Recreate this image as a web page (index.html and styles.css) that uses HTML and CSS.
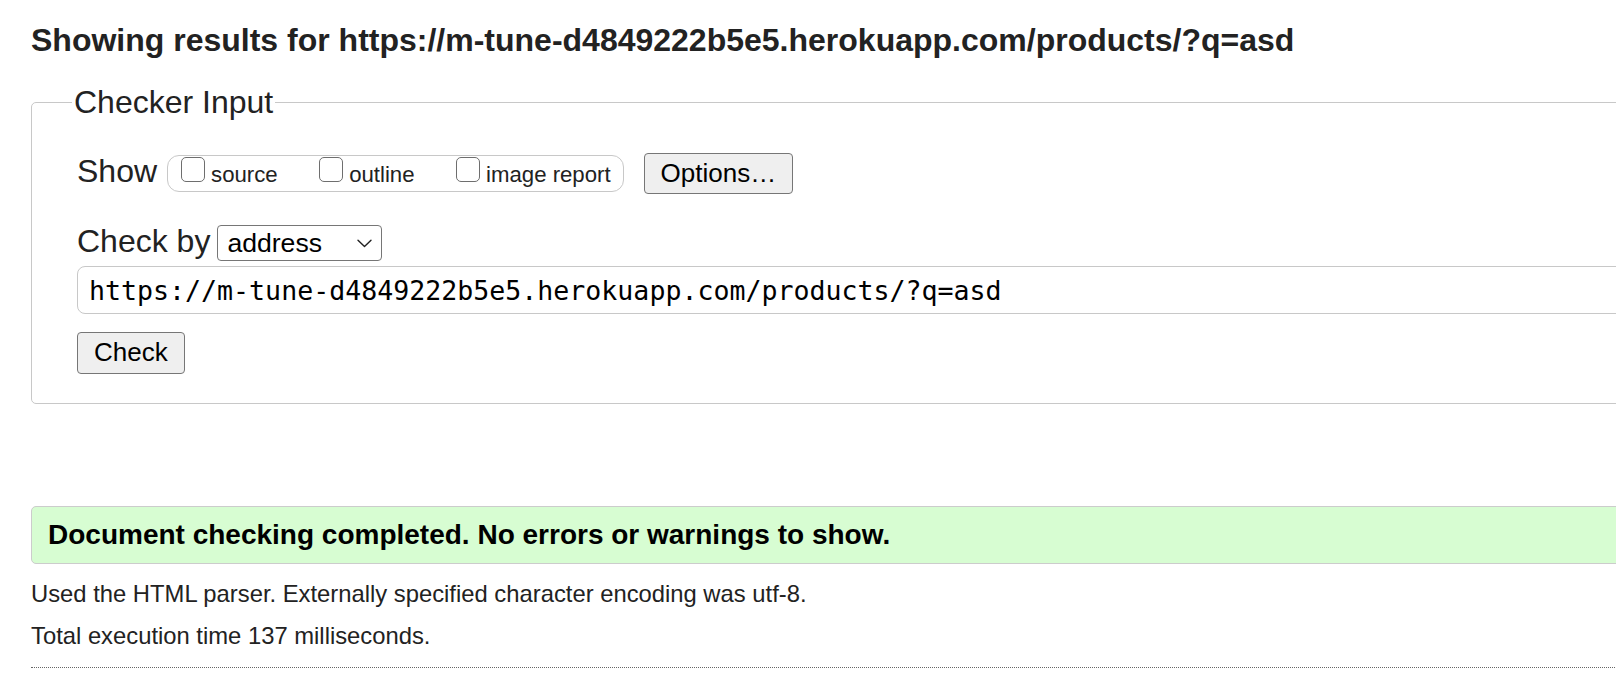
FILE: index.html
```html
<!DOCTYPE html>
<html lang="en">
<head>
<meta charset="utf-8">
<title>Nu Html Checker</title>
<link rel="stylesheet" href="styles.css">
</head>
<body>
<h1 class="results-title">Showing results for https://m-tune-d4849222b5e5.herokuapp.com/products/?q=asd</h1>
<form class="checker">
  <fieldset class="checker-input">
    <legend class="checker-legend">Checker Input</legend>
    <div class="show-row">
      <span class="row-label show-label">Show</span>
      <div class="show-options">
        <label class="opt"><input type="checkbox" class="cb">source</label>
        <label class="opt"><input type="checkbox" class="cb">outline</label>
        <label class="opt"><input type="checkbox" class="cb">image report</label>
      </div>
      <button type="button" class="btn btn-options">Options…</button>
    </div>
    <div class="by-row">
      <label class="row-label by-label" for="docselect">Check by</label>
      <span class="select-wrap">
        <select id="docselect" class="doc-select"><option>address</option></select>
        <svg class="chevron" width="15" height="9" viewBox="0 0 15 9" aria-hidden="true"><path d="M1 1.2 L7.5 7.6 L14 1.2" fill="none" stroke="#222" stroke-width="1.4" stroke-linecap="round" stroke-linejoin="round"/></svg>
      </span>
    </div>
    <input class="url-input" type="text" value="https://m-tune-d4849222b5e5.herokuapp.com/products/?q=asd">
    <div class="submit-row"><button type="button" class="btn btn-check">Check</button></div>
  </fieldset>
</form>
<p class="success">Document checking completed. No errors or warnings to show.</p>
<p class="meta meta-parser">Used the HTML parser. Externally specified character encoding was utf-8.</p>
<p class="meta meta-time">Total execution time 137 milliseconds.</p>
<hr class="dotted">
</body>
</html>
```

FILE: styles.css
```css
html {
  overflow: hidden;
}

body {
  margin: 0;
  padding: 22px 0 0 31px;
  font-family: "Liberation Sans", Arial, sans-serif;
  color: #222;
  background: #fff;
}

.results-title {
  margin: 0;
  font-size: 32px;
  font-weight: bold;
  line-height: normal;
  white-space: nowrap;
}

.checker {
  width: 1700px;
  margin-top: 25px;
}

.checker-input {
  margin: 0;
  padding: 32px 0 29px 45px;
  border: 1px solid #c8c8c8;
  border-radius: 5px;
  min-width: 0;
}

.checker-legend {
  font-size: 32px;
  line-height: normal;
  padding: 0 2px;
  margin-left: -5px;
}

.show-row {
  display: flex;
  align-items: baseline;
}

.row-label {
  font-size: 32px;
  line-height: normal;
}

.show-label {
  margin-right: 10px;
}

.show-options {
  display: flex;
  align-items: flex-start;
  gap: 41.5px;
  box-sizing: border-box;
  height: 37px;
  padding: 1px 12px 0 13px;
  border: 1px solid #c8c8c8;
  border-radius: 12px;
}

.opt {
  display: block;
  font-size: 22.2px;
  line-height: 25px;
  white-space: nowrap;
}

.cb {
  appearance: none;
  -webkit-appearance: none;
  display: inline-block;
  vertical-align: baseline;
  box-sizing: border-box;
  width: 24px;
  height: 25px;
  margin: 0 6px 0 0;
  border: 1.5px solid #6e6e6e;
  border-radius: 5px;
  background: #fff;
}

.btn {
  font-family: "Liberation Sans", Arial, sans-serif;
  font-size: 26px;
  line-height: normal;
  color: #000;
  background: #efefef;
  border: 1.5px solid #767676;
  border-radius: 4px;
  box-sizing: border-box;
}

.btn-options {
  height: 41px;
  padding: 0 16px;
  margin-left: 20px;
}

.by-row {
  display: flex;
  align-items: baseline;
  margin-top: 28.5px;
}

.by-label {
  margin-right: 7px;
}

.select-wrap {
  position: relative;
  display: inline-block;
}

.doc-select {
  appearance: none;
  -webkit-appearance: none;
  box-sizing: border-box;
  width: 165px;
  height: 36px;
  padding: 0 0 0 9px;
  font-family: "Liberation Sans", Arial, sans-serif;
  font-size: 26.6px;
  color: #000;
  background: #fff;
  border: 1px solid #767676;
  border-radius: 4px;
}

.chevron {
  position: absolute;
  right: 10px;
  top: 14px;
  pointer-events: none;
}

.url-input {
  display: block;
  box-sizing: border-box;
  width: 100%;
  height: 48px;
  margin: 5.5px 0 0;
  padding: 0 11px;
  font-family: "DejaVu Sans Mono", "Liberation Mono", monospace;
  font-size: 26.6px;
  color: #000;
  background: #fff;
  border: 1px solid #c8c8c8;
  border-radius: 8px;
}

.submit-row {
  margin-top: 17.5px;
}

.btn-check {
  height: 42px;
  padding: 0 16px;
}

.success {
  box-sizing: border-box;
  width: 1700px;
  height: 58px;
  margin: 102px 0 0;
  padding-left: 16px;
  font-size: 28px;
  font-weight: bold;
  line-height: 56px;
  color: #000;
  background: #d7fdd2;
  border: 1px solid #cccccc;
  border-radius: 5px;
}

.meta {
  font-size: 23.8px;
  line-height: normal;
  margin: 0;
}

.meta-parser {
  margin-top: 16px;
}

.meta-time {
  margin-top: 14.5px;
}

.dotted {
  width: 1700px;
  height: 0;
  margin: 16.5px 0 0;
  border: 0;
  border-top: 1px dotted #666;
}
```
